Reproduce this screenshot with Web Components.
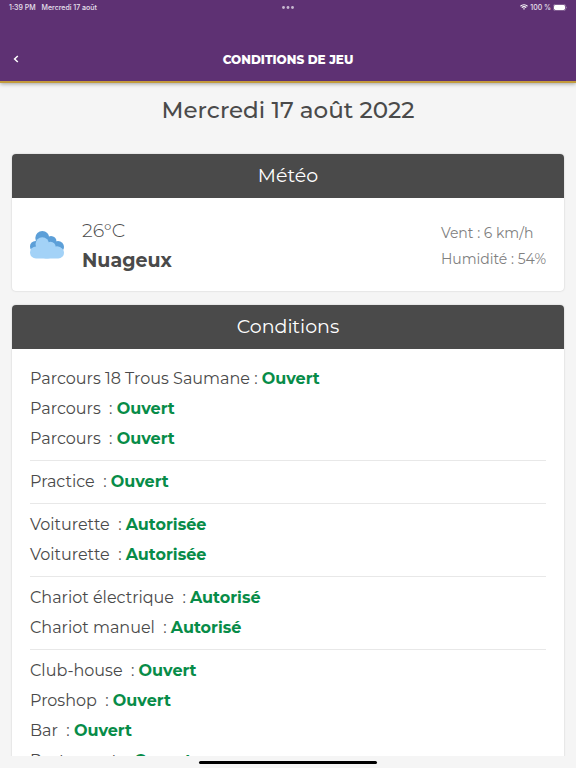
<!DOCTYPE html>
<html lang="fr">
<head>
<meta charset="utf-8">
<meta name="viewport" content="width=device-width, initial-scale=1">
<title>Conditions de jeu</title>
<style>
  body {
    margin: 0;
    background: #f5f5f5;
    color: #4a4a4a;
    font-family: Montserrat, Inter, "Open Sans", sans-serif;
  }
</style>
</head>
<body>
<golf-app></golf-app>

<script>
class StatusBar extends HTMLElement {

    constructor() {
        super();
        this.shadowDOM = this.attachShadow({mode: "open"});
    }

    connectedCallback() {
        this.render();
    }

    render() {
        this.shadowDOM.innerHTML = `
        <style>
        :host {
            display: grid;
            grid-template-columns: 1fr auto 1fr;
            align-items: center;
            height: 14px;
            padding: 0 9px;
            font-family: Inter, sans-serif;
            font-size: 7px;
            font-weight: 500;
            color: #e9e2ee;
        }

        .left {
            display: flex;
            gap: 6px;
        }

        .right {
            display: flex;
            justify-content: flex-end;
            align-items: center;
            gap: 2px;
        }

        svg {
            display: block;
        }
        </style>
        <div class="left"><span>1:39 PM</span><span>Mercredi 17 août</span></div>
        <svg width="12" height="3" viewBox="0 0 12 3" fill="#c7b8d0">
            <circle cx="1.5" cy="1.5" r="1.4"/>
            <circle cx="6" cy="1.5" r="1.4"/>
            <circle cx="10.5" cy="1.5" r="1.4"/>
        </svg>
        <div class="right">
            <svg width="8" height="6" viewBox="0 0 16 12" fill="none" stroke="#fff" stroke-width="2.2">
                <path d="M1 4.5a10 10 0 0 1 14 0"/>
                <path d="M3.6 7.3a6.3 6.3 0 0 1 8.8 0"/>
                <path d="M8 11.6L5.8 9.3a3.2 3.2 0 0 1 4.4 0z" fill="#fff" stroke="none"/>
            </svg>
            <span>100 %</span>
            <svg width="14" height="7" viewBox="0 0 14 7">
                <rect x=".3" y=".3" width="12.4" height="6.4" rx="2" fill="none" stroke="#a78db3" stroke-width=".6"/>
                <rect x="1" y="1" width="11" height="5" rx="1.4" fill="#fff"/>
                <path d="M13.2 2.4v2.2q.8-.4.8-1.1t-.8-1.1z" fill="#a78db3"/>
            </svg>
        </div>
        `;
    }
}

customElements.define("status-bar", StatusBar);


class AppHeader extends HTMLElement {

    constructor() {
        super();
        this.shadowDOM = this.attachShadow({mode: "open"});
    }

    connectedCallback() {
        this.render();
    }

    render() {
        this.shadowDOM.innerHTML = `
        <style>
        :host {
            display: block;
            flex: none;
            z-index: 1;
            background: #5e3173;
            border-bottom: 2px solid #c39b3c;
            box-shadow: 0 1px 4px rgba(0, 0, 0, 0.35);
            color: white;
        }

        .bar {
            display: grid;
            grid-template-columns: 32px 1fr 32px;
            align-items: center;
            height: 44px;
            padding-top: 23px;
        }

        h1 {
            margin: 0;
            text-align: center;
            text-transform: uppercase;
            font-size: 12px;
            font-weight: 800;
        }

        button {
            display: grid;
            place-items: center;
            height: 32px;
            padding: 0;
            border: 0;
            background: none;
            cursor: pointer;
        }
        </style>
        <status-bar></status-bar>
        <div class="bar">
            <button type="button" aria-label="Retour">
                <svg width="6" height="8" viewBox="0 0 6 8" fill="none" stroke="#fff" stroke-width="1.5">
                    <path d="M4.8 1L1.6 4l3.2 3"/>
                </svg>
            </button>
            <h1><slot></slot></h1>
        </div>
        `;
    }
}

customElements.define("app-header", AppHeader);


class InfoCard extends HTMLElement {

    constructor() {
        super();
        this.shadowDOM = this.attachShadow({mode: "open"});
    }

    connectedCallback() {
        this.render();
    }

    render() {
        this.shadowDOM.innerHTML = `
        <style>
        :host {
            display: block;
            overflow: hidden;
            border-radius: 4px;
            background: white;
            box-shadow: 0 0 2px rgba(0, 0, 0, 0.2);
        }

        h3 {
            margin: 0;
            background: #4a4a4a;
            color: white;
            text-align: center;
            font-size: 19px;
            font-weight: 400;
            line-height: 44px;
        }

        .content {
            padding: 15px 18px;
        }
        </style>
        <h3>${this.getAttribute("heading")}</h3>
        <div class="content"><slot></slot></div>
        `;
    }
}

customElements.define("info-card", InfoCard);


class WeatherInfo extends HTMLElement {

    constructor() {
        super();
        this.shadowDOM = this.attachShadow({mode: "open"});
    }

    connectedCallback() {
        this.render();
    }

    render() {
        this.shadowDOM.innerHTML = `
        <style>
        :host {
            display: flex;
            align-items: center;
            padding-top: 3px;
            font-size: 19px;
            line-height: 30px;
        }

        svg {
            width: 34px;
            height: 34px;
            margin-right: 18px;
        }

        p {
            margin: 0;
        }

        .temperature {
            font-weight: 300;
        }

        .label {
            font-weight: 700;
        }

        .details {
            margin-left: auto;
            color: #808080;
            font-size: 14px;
            font-weight: 400;
            line-height: 26px;
        }
        </style>
        <svg viewBox="0 0 34 34" aria-hidden="true">
            <g fill="#5c9fd8">
                <circle cx="5.5" cy="17.500" r="5.500"/>
                <circle cx="12.300" cy="9" r="7"/>
                <circle cx="21" cy="12.500" r="5.500"/>
                <circle cx="28" cy="18" r="6"/>
                <rect x="6" y="10" width="20" height="12"/>
            </g>
            <g fill="#a3d2f7">
                <circle cx="12.300" cy="15" r="6.800"/>
                <circle cx="20.500" cy="18" r="5.200"/>
                <circle cx="27" cy="23" r="5.800"/>
                <rect y="17.500" width="24" height="12" rx="6"/>
                <rect x="10" y="18" width="24" height="11.500" rx="5.700"/>
            </g>
        </svg>
        <div>
            <p class="temperature">26°C</p>
            <p class="label">Nuageux</p>
        </div>
        <div class="details">
            <p>Vent : 6 km/h</p>
            <p>Humidité : 54%</p>
        </div>
        `;
    }
}

customElements.define("weather-info", WeatherInfo);


class ConditionList extends HTMLElement {

    constructor() {
        super();
        this.shadowDOM = this.attachShadow({mode: "open"});
    }

    set groups(groups) {
        this._groups = groups;
        this.render();
    }

    render() {
        this.shadowDOM.innerHTML = `
        <style>
        :host {
            display: block;
            font-size: 16px;
            line-height: 30px;
        }

        ul {
            list-style: none;
            margin: 0;
            padding: 0 0 6px;
        }

        ul + ul {
            padding-top: 6px;
            border-top: 1px solid #e8e8e8;
        }

        strong {
            color: #078c48;
            font-weight: 700;
        }
        </style>
        ${this._groups.map(group => `
        <ul>
            ${group.map(([name, status]) => `<li>${name} : <strong>${status}</strong></li>`).join("")}
        </ul>`).join("")}
        `;
    }
}

customElements.define("condition-list", ConditionList);


class GolfApp extends HTMLElement {

    constructor() {
        super();
        this.shadowDOM = this.attachShadow({mode: "open"});
    }

    connectedCallback() {
        this.render();
    }

    render() {
        this.shadowDOM.innerHTML = `
        <style>
        :host {
            display: flex;
            flex-direction: column;
            height: 100vh;
        }

        main {
            flex: 1;
            min-height: 0;
            overflow-y: auto;
            scrollbar-width: none;
            padding: 0 12px;
        }

        h2 {
            margin: 12px 0 28px;
            text-align: center;
            font-size: 23px;
            font-weight: 500;
            line-height: 31px;
        }

        info-card + info-card {
            margin-top: 14px;
        }

        footer {
            display: flex;
            justify-content: center;
            align-items: center;
            height: 12px;
        }

        .home {
            width: 31%;
            height: 3px;
            border-radius: 2px;
            background: black;
        }
        </style>
        <app-header>Conditions de jeu</app-header>
        <main>
            <h2>Mercredi 17 août 2022</h2>
            <info-card heading="Météo">
                <weather-info></weather-info>
            </info-card>
            <info-card heading="Conditions">
                <condition-list></condition-list>
            </info-card>
        </main>
        <footer><div class="home"></div></footer>
        `;

        this.shadowDOM.querySelector("condition-list").groups = [
            [
                ["Parcours 18 Trous Saumane", "Ouvert"],
                ["Parcours&nbsp;", "Ouvert"],
                ["Parcours&nbsp;", "Ouvert"]
            ],
            [
                ["Practice&nbsp;", "Ouvert"]
            ],
            [
                ["Voiturette&nbsp;", "Autorisée"],
                ["Voiturette&nbsp;", "Autorisée"]
            ],
            [
                ["Chariot électrique&nbsp;", "Autorisé"],
                ["Chariot manuel&nbsp;", "Autorisé"]
            ],
            [
                ["Club-house&nbsp;", "Ouvert"],
                ["Proshop&nbsp;", "Ouvert"],
                ["Bar&nbsp;", "Ouvert"],
                ["Restaurant&nbsp;", "Ouvert"]
            ]
        ];
    }
}

customElements.define("golf-app", GolfApp);
</script>
</body>
</html>
